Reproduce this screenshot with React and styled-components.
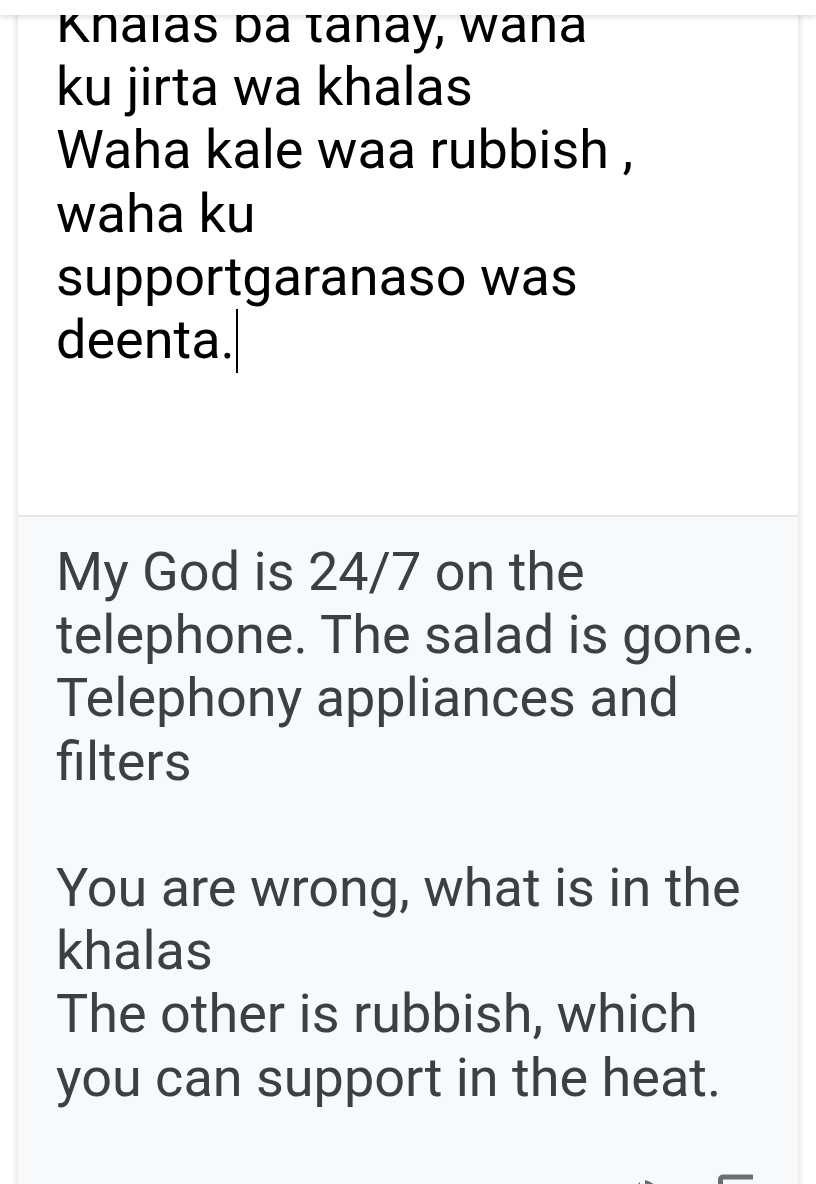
import React from 'react';
import styled, {createGlobalStyle} from 'styled-components';

const GlobalStyle = createGlobalStyle`
  html, body {
    margin: 0;
    padding: 0;
    background: #ffffff;
    overflow: hidden;
  }
  body {
    font-family: Roboto, "Noto Sans", sans-serif;
  }
`;

const Page = styled.div`
  position: relative;
  width: 816px;
  height: 1184px;
  overflow: hidden;
  background: #ffffff;
`;

const Header = styled.div`
  position: absolute;
  top: 0;
  left: 0;
  right: 0;
  height: 15px;
  background: #ffffff;
  box-shadow: 0 2px 6px rgba(0, 0, 0, 0.14);
  z-index: 2;
`;

const Card = styled.div`
  margin: -8px 18px 0;
  background: #ffffff;
  box-shadow: 0 1px 8px rgba(0, 0, 0, 0.16);
  display: flex;
  flex-direction: column;
`;

const Source = styled.div`
  height: 525px;
  box-sizing: border-box;
  padding: 0 24px 0 38px;
  border-bottom: 2px solid #e6e6e6;
  font-size: 54px;
  line-height: 63.2px;
  color: #000000;
  white-space: pre-wrap;
`;

const Caret = styled.span`
  display: inline-block;
  width: 2px;
  height: 64px;
  margin-left: 1px;
  vertical-align: -15px;
  background: #000000;
`;

const Result = styled.div`
  background: #f8f9fa;
  padding: 23px 24px 0 38px;
  font-size: 54px;
  line-height: 63.2px;
  color: #3c4043;
  white-space: pre-wrap;
  min-height: 700px;
`;

const Actions = styled.div`
  display: flex;
  justify-content: flex-end;
  gap: 43px;
  padding: 63px 1px 0 0;
  color: #6b6e72;
`;

const sourceText = `Khalas ba tanay, wana
ku jirta wa khalas
Waha kale waa rubbish ,
waha ku
supportgaranaso was
deenta.`;

const resultText = `My God is 24/7 on the
telephone. The salad is gone.
Telephony appliances and
filters

You are wrong, what is in the
khalas
The other is rubbish, which
you can support in the heat.`;

function SpeakerIcon() {
  return (
    <svg width="60" height="60" viewBox="0 0 24 24" fill="currentColor">
      <path d="M3 9v6h4l5 5V4L7 9H3zm13.5 3c0-1.77-1.02-3.29-2.5-4.03v8.05c1.48-.73 2.5-2.25 2.5-4.02zM14 3.23v2.06c2.89.86 5 3.54 5 6.71s-2.11 5.85-5 6.71v2.06c4.01-.91 7-4.49 7-8.77s-2.99-7.86-7-8.77z" />
    </svg>
  );
}

function CopyIcon() {
  return (
    <svg width="60" height="60" viewBox="0 0 24 24" fill="currentColor">
      <path d="M16 1H4c-1.1 0-2 .9-2 2v14h2V3h12V1zm3 4H8c-1.1 0-2 .9-2 2v14c0 1.1.9 2 2 2h11c1.1 0 2-.9 2-2V7c0-1.1-.9-2-2-2zm0 16H8V7h11v14z" />
    </svg>
  );
}

export default function App() {
  return (
    <Page>
      <GlobalStyle />
      <Header />
      <Card>
        <Source>
          {sourceText}
          <Caret />
        </Source>
        <Result>
          {resultText}
          <Actions>
            <SpeakerIcon />
            <CopyIcon />
          </Actions>
        </Result>
      </Card>
    </Page>
  );
}
